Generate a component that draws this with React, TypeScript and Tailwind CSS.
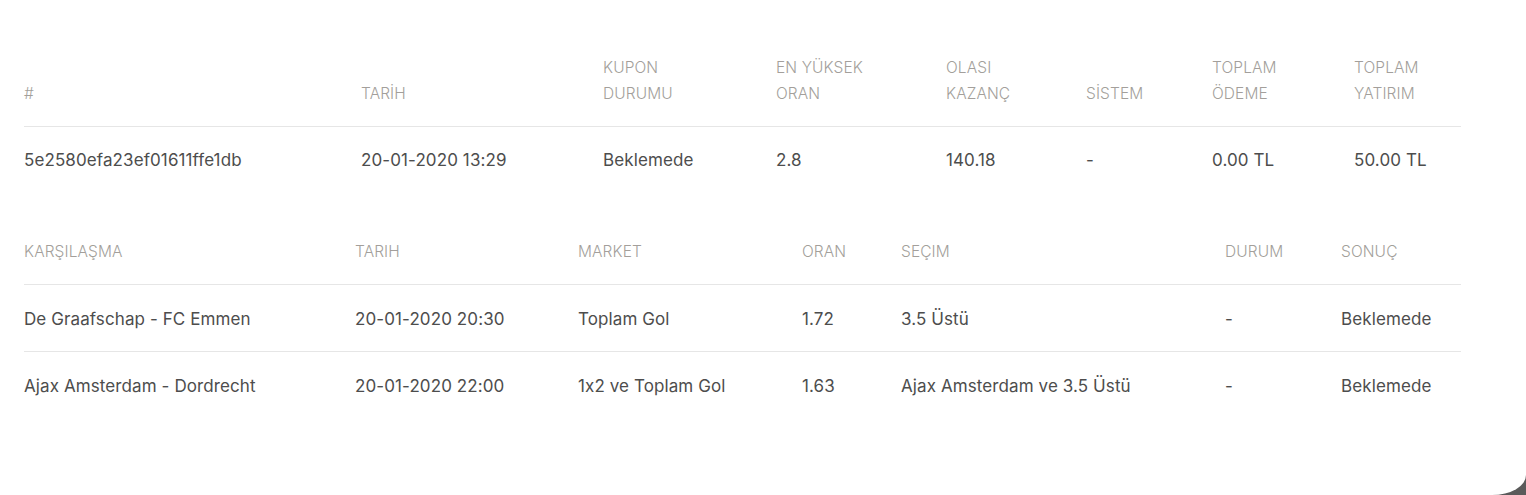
import React from 'react';

const couponHead = [
    { label: ['#'], w: 'w-[337px]' },
    { label: ['TARİH'], w: 'w-[242px]' },
    { label: ['KUPON', 'DURUMU'], w: 'w-[173px]' },
    { label: ['EN YÜKSEK', 'ORAN'], w: 'w-[170px]' },
    { label: ['OLASI', 'KAZANÇ'], w: 'w-[140px]' },
    { label: ['SİSTEM'], w: 'w-[126px]' },
    { label: ['TOPLAM', 'ÖDEME'], w: 'w-[142px]' },
    { label: ['TOPLAM', 'YATIRIM'], w: 'w-[107px]' },
];

const couponRow = ['5e2580efa23ef01611ffe1db', '20-01-2020 13:29', 'Beklemede', '2.8', '140.18', '-', '0.00 TL', '50.00 TL'];

const matchHead = [
    { label: 'KARŞILAŞMA', w: 'w-[331px]' },
    { label: 'TARIH', w: 'w-[223px]' },
    { label: 'MARKET', w: 'w-[224px]' },
    { label: 'ORAN', w: 'w-[99px]' },
    { label: 'SEÇIM', w: 'w-[324px]' },
    { label: 'DURUM', w: 'w-[116px]' },
    { label: 'SONUÇ', w: 'w-[120px]' },
];

const matches = [
    ['De Graafschap - FC Emmen', '20-01-2020 20:30', 'Toplam Gol', '1.72', '3.5 Üstü', '-', 'Beklemede'],
    ['Ajax Amsterdam - Dordrecht', '20-01-2020 22:00', '1x2 ve Toplam Gol', '1.63', 'Ajax Amsterdam ve 3.5 Üstü', '-', 'Beklemede'],
];

export default function App() {
    return (
        <div className="h-[495px] w-full overflow-hidden bg-[#5a5a5a]">
            <div className="h-full w-full bg-white rounded-br-[34px_20px] pt-[34px] pl-[24px] font-['Inter',sans-serif]">
                <table className="table-fixed border-collapse w-[1437px]">
                    <thead>
                        <tr className="border-b border-[#e6e6e6]">
                            {couponHead.map((h) => (
                                <th
                                    key={h.label.join(' ')}
                                    className={`${h.w} pt-[21px] pb-[19px] text-left align-bottom font-light text-[15.5px] leading-[26px] tracking-[0.1px] text-[#a39f9b]`}
                                >
                                    {h.label.map((l) => (
                                        <div key={l}>{l}</div>
                                    ))}
                                </th>
                            ))}
                        </tr>
                    </thead>
                    <tbody>
                        <tr>
                            {couponRow.map((c, i) => (
                                <td key={i} className="pt-[20px] pb-[18px] whitespace-nowrap text-[17px] leading-[26px] tracking-[0.1px] text-[#4d4d4d]">
                                    {c}
                                </td>
                            ))}
                        </tr>
                    </tbody>
                </table>

                <table className="table-fixed border-collapse w-[1437px] mt-[27px]">
                    <thead>
                        <tr className="border-b border-[#e6e6e6]">
                            {matchHead.map((h) => (
                                <th
                                    key={h.label}
                                    className={`${h.w} pt-[21px] pb-[19px] text-left font-light text-[15.5px] leading-[26px] tracking-[0.1px] text-[#a39f9b]`}
                                >
                                    {h.label}
                                </th>
                            ))}
                        </tr>
                    </thead>
                    <tbody>
                        {matches.map((row, r) => (
                            <tr key={r} className={r === 0 ? 'border-b border-[#e6e6e6]' : ''}>
                                {row.map((c, i) => (
                                    <td key={i} className="pt-[21px] pb-[19px] whitespace-nowrap text-[17px] leading-[26px] tracking-[0.1px] text-[#4d4d4d]">
                                        {c}
                                    </td>
                                ))}
                            </tr>
                        ))}
                    </tbody>
                </table>
            </div>
        </div>
    );
}
